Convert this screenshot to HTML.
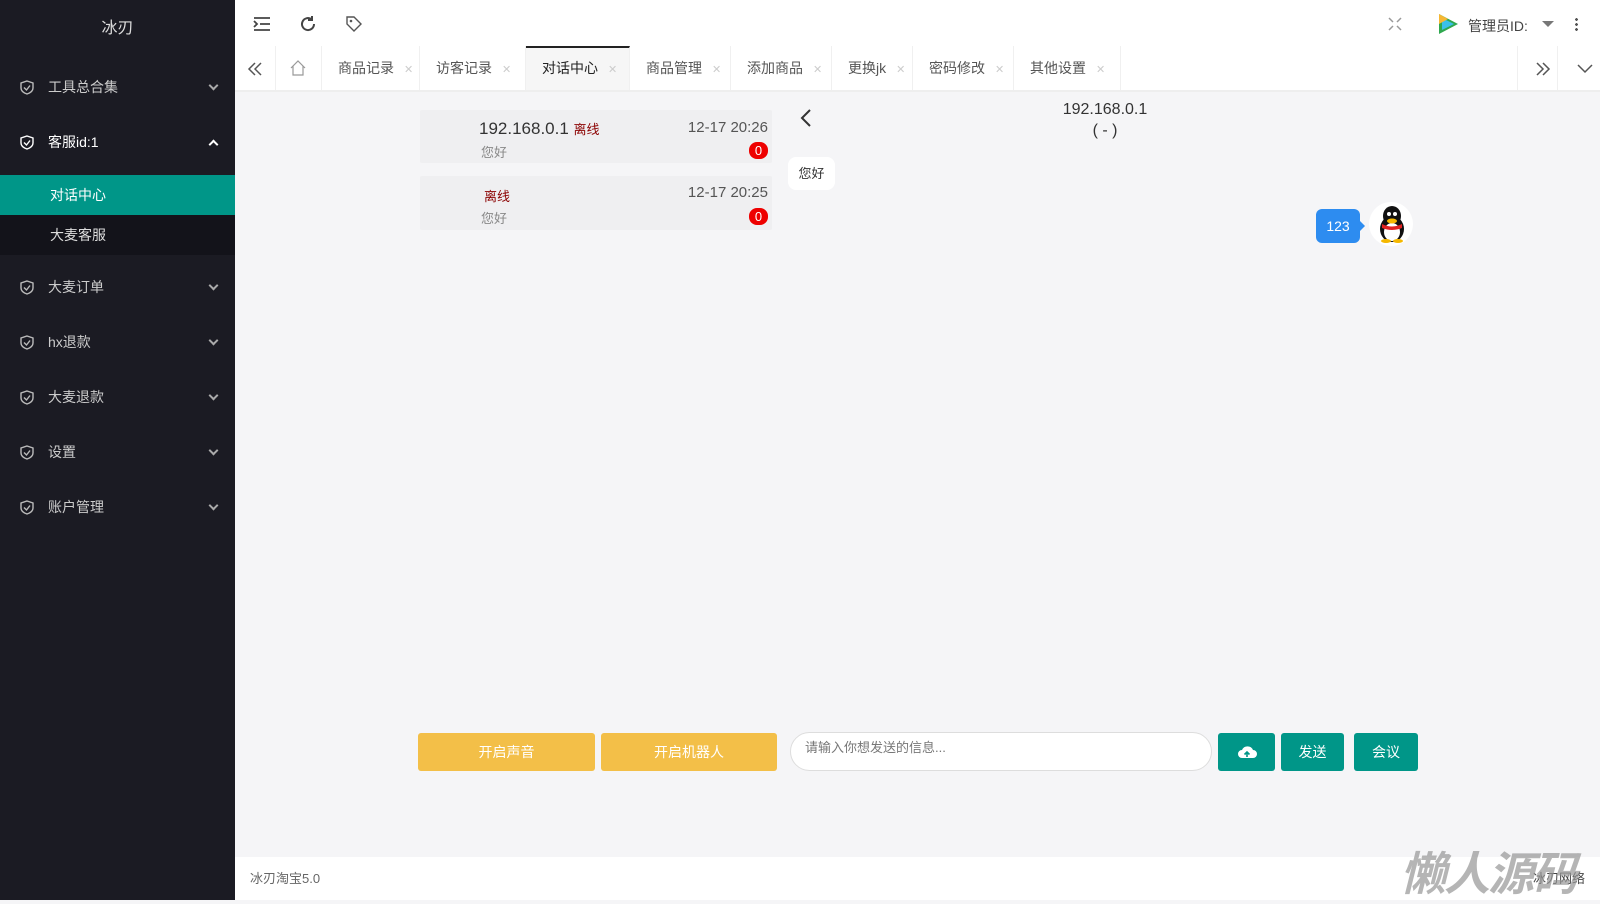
<!DOCTYPE html>
<html><head><meta charset="utf-8"><style>
*{margin:0;padding:0;box-sizing:border-box}
body{width:1600px;height:900px;overflow:hidden;font-family:"Liberation Sans","Noto Sans CJK SC",sans-serif;background:#f5f5f7;position:relative;font-size:14px;color:#333}
.side{position:absolute;left:0;top:0;width:235px;height:900px;background:#1b1b23}
.logo{position:absolute;top:14px;width:235px;text-align:center;color:#ddd;font-size:16px}
.mi{position:absolute;left:0;width:235px;height:40px;line-height:40px;color:#ccc;font-size:14px}
.mi svg{position:absolute;left:20px;top:13px}
.mi .t{position:absolute;left:48px}
.mi .ar{position:absolute;right:18px;top:15px;width:7px;height:7px;border-right:2px solid #aaa;border-bottom:2px solid #aaa;transform:rotate(45deg)}
.mi .up{transform:rotate(-135deg);top:19px}
.sub{position:absolute;left:0;width:235px;height:40px;line-height:40px;padding-left:50px;color:#ddd;background:#13131a}
.hdr{position:absolute;left:235px;top:0;right:0;height:46px;background:#fff}
.tabs{position:absolute;left:235px;top:46px;right:0;height:46px;background:#fff;border-bottom:2px solid #eee}
.tab{position:absolute;top:0;height:44px;line-height:44px;font-size:14px;color:#555;border-right:1px solid #f0f0f0;padding-left:16px}
.tab i{font-style:normal;color:#ccc;font-size:11px;margin-left:10px}
.act{background:#f6f6f6;border-top:2px solid #222;color:#222;line-height:40px}
.card{position:absolute;left:420px;width:352px;background:#efeff1;border-radius:2px}
.badge{position:absolute;right:4px;width:19px;height:17px;border-radius:8px;background:#e00;color:#fff;font-size:13px;text-align:center;line-height:17px}
.btn{position:absolute;top:733px;height:38px;line-height:38px;text-align:center;color:#fff;border-radius:3px;font-size:14px}
.y{background:#f3bf48}.g{background:#009688}
.foot{position:absolute;left:235px;right:0;top:857px;height:43px;background:#fff;font-size:13px;color:#666;line-height:43px;padding-left:15px}
</style></head><body>
<div class="side">
<div class="logo">冰刃</div>
<div class="mi" style="top:67px"><svg width="14" height="15"><path d="M7 1L13 3V8Q13 12 7 14Q1 12 1 8V3Z M4 7.5L6.5 10L10 5.5" stroke="#bbb" stroke-width="1.4" fill="none"/></svg><span class="t">工具总合集</span><span class="ar"></span></div>
<div class="mi" style="top:122px;color:#fff"><svg width="14" height="15"><path d="M7 1L13 3V8Q13 12 7 14Q1 12 1 8V3Z M4 7.5L6.5 10L10 5.5" stroke="#fff" stroke-width="1.4" fill="none"/></svg><span class="t">客服id:1</span><span class="ar up" style="border-color:#fff"></span></div>
<div class="sub" style="top:175px;background:#009688;color:#fff">对话中心</div>
<div class="sub" style="top:215px">大麦客服</div>
<div class="mi" style="top:267px"><svg width="14" height="15"><path d="M7 1L13 3V8Q13 12 7 14Q1 12 1 8V3Z M4 7.5L6.5 10L10 5.5" stroke="#bbb" stroke-width="1.4" fill="none"/></svg><span class="t">大麦订单</span><span class="ar"></span></div>
<div class="mi" style="top:322px"><svg width="14" height="15"><path d="M7 1L13 3V8Q13 12 7 14Q1 12 1 8V3Z M4 7.5L6.5 10L10 5.5" stroke="#bbb" stroke-width="1.4" fill="none"/></svg><span class="t">hx退款</span><span class="ar"></span></div>
<div class="mi" style="top:377px"><svg width="14" height="15"><path d="M7 1L13 3V8Q13 12 7 14Q1 12 1 8V3Z M4 7.5L6.5 10L10 5.5" stroke="#bbb" stroke-width="1.4" fill="none"/></svg><span class="t">大麦退款</span><span class="ar"></span></div>
<div class="mi" style="top:432px"><svg width="14" height="15"><path d="M7 1L13 3V8Q13 12 7 14Q1 12 1 8V3Z M4 7.5L6.5 10L10 5.5" stroke="#bbb" stroke-width="1.4" fill="none"/></svg><span class="t">设置</span><span class="ar"></span></div>
<div class="mi" style="top:487px"><svg width="14" height="15"><path d="M7 1L13 3V8Q13 12 7 14Q1 12 1 8V3Z M4 7.5L6.5 10L10 5.5" stroke="#bbb" stroke-width="1.4" fill="none"/></svg><span class="t">账户管理</span><span class="ar"></span></div>
</div>
<div class="hdr">
<svg style="position:absolute;left:18px;top:16px" width="18" height="16"><path d="M1 2H17M7 8H17M1 14H17M1 5L4 8L1 11" stroke="#444" stroke-width="1.8" fill="none"/></svg>
<svg style="position:absolute;left:64px;top:15px" width="18" height="18"><path d="M15 9A6 6 0 1 1 12.5 4.2M13 1V5H9" stroke="#444" stroke-width="2" fill="none"/></svg>
<svg style="position:absolute;left:110px;top:15px" width="18" height="18"><path d="M2 2H9L16 9L9 16L2 9Z" stroke="#555" stroke-width="1.4" fill="none"/><circle cx="6" cy="6" r="1.3" fill="#555"/></svg>
<svg style="position:absolute;left:1153px;top:17px" width="14" height="14"><path d="M1 1L5 5M13 1L9 5M1 13L5 9M13 13L9 9" stroke="#999" stroke-width="1.5"/></svg>
<svg style="position:absolute;left:1201px;top:12px" width="24" height="24"><path d="M3 2L22 12L3 22Z" fill="#2fa84f"/><path d="M6 6L18 12L6 18Z" fill="#3ac0ea"/><path d="M3 2L12 7L3 12Z" fill="#f7b733"/></svg>
<div style="position:absolute;left:1233px;top:16px;font-size:14px;color:#444">管理员ID:</div>
<div style="position:absolute;left:1307px;top:21px;border:6px solid transparent;border-top-color:#777"></div>
<div style="position:absolute;left:1340px;top:17px;width:3px;height:14px;background:radial-gradient(circle,#555 1.3px,transparent 1.5px) 0 0/3px 5px"></div>
</div>
<div class="tabs">
<svg style="position:absolute;left:12px;top:16px" width="16" height="14"><path d="M8 1L2 7L8 13M14 1L8 7L14 13" stroke="#555" stroke-width="1.5" fill="none"/></svg>
<div class="tab" style="left:40px;width:47px;border-left:1px solid #f0f0f0"></div>
<svg style="position:absolute;left:55px;top:14px" width="16" height="16"><path d="M1 8L8 1L15 8M3 6V15H13V6" stroke="#999" stroke-width="1.2" fill="none"/></svg>
<div class="tab" style="left:87px;width:98px">商品记录<i>✕</i></div>
<div class="tab" style="left:185px;width:106px">访客记录<i>✕</i></div>
<div class="tab act" style="left:291px;width:104px">对话中心<i>✕</i></div>
<div class="tab" style="left:395px;width:101px">商品管理<i>✕</i></div>
<div class="tab" style="left:496px;width:101px">添加商品<i>✕</i></div>
<div class="tab" style="left:597px;width:81px">更换jk<i>✕</i></div>
<div class="tab" style="left:678px;width:101px">密码修改<i>✕</i></div>
<div class="tab" style="left:779px;width:107px">其他设置<i>✕</i></div>
<div class="tab" style="left:1282px;width:41px;border-left:1px solid #f0f0f0"></div>
<svg style="position:absolute;left:1300px;top:16px" width="16" height="14"><path d="M2 1L8 7L2 13M8 1L14 7L8 13" stroke="#555" stroke-width="1.5" fill="none"/></svg>
<svg style="position:absolute;left:1342px;top:18px" width="16" height="10"><path d="M1 1L8 8L15 1" stroke="#555" stroke-width="1.5" fill="none"/></svg>
</div>
<div class="card" style="top:110px;height:53px">
<div style="position:absolute;left:59px;top:9px;font-size:17px;color:#333">192.168.0.1 <span style="font-size:13px;color:#8b0000">离线</span></div>
<div style="position:absolute;left:61px;top:32px;font-size:13px;color:#888">您好</div>
<div style="position:absolute;right:4px;top:9px;font-size:15px;color:#555">12-17 20:26</div>
<div class="badge" style="top:32px">0</div>
</div>
<div class="card" style="top:176px;height:54px">
<div style="position:absolute;left:64px;top:10px;font-size:13px;color:#8b0000">离线</div>
<div style="position:absolute;left:61px;top:32px;font-size:13px;color:#888">您好</div>
<div style="position:absolute;right:4px;top:8px;font-size:15px;color:#555">12-17 20:25</div>
<div class="badge" style="top:32px">0</div>
</div>
<svg style="position:absolute;left:800px;top:109px" width="12" height="18"><path d="M10 1L2 9L10 17" stroke="#333" stroke-width="2" fill="none"/></svg>
<div style="position:absolute;left:1000px;width:210px;top:99px;text-align:center;font-size:16px;color:#333;line-height:21px">192.168.0.1<br>( - )</div>
<div style="position:absolute;left:788px;top:157px;width:47px;height:33px;background:#fff;border-radius:8px;line-height:33px;text-align:center;font-size:13px">您好</div>
<div style="position:absolute;left:1316px;top:209px;width:44px;height:34px;background:#2d8cf0;border-radius:6px;color:#fff;line-height:34px;text-align:center;font-size:14px">123</div>
<div style="position:absolute;left:1359px;top:220px;border:6px solid transparent;border-left-color:#2d8cf0"></div>
<div style="position:absolute;left:1369px;top:202px;width:44px;height:44px;border-radius:50%;background:#fff"></div>
<svg style="position:absolute;left:1377px;top:205px" width="30" height="38"><ellipse cx="15" cy="24" rx="12" ry="13" fill="#111"/><ellipse cx="15" cy="11" rx="9" ry="10" fill="#111"/><ellipse cx="15" cy="27" rx="8" ry="9" fill="#fff"/><path d="M5 19Q15 24 25 19V23Q15 27 5 23Z" fill="#e02020"/><ellipse cx="15" cy="16" rx="5" ry="2.5" fill="#f5b800"/><circle cx="12" cy="9" r="2" fill="#fff"/><circle cx="18" cy="9" r="2" fill="#fff"/><ellipse cx="9" cy="36" rx="5" ry="2" fill="#f5b800"/><ellipse cx="21" cy="36" rx="5" ry="2" fill="#f5b800"/></svg>
<div class="btn y" style="left:418px;width:177px">开启声音</div>
<div class="btn y" style="left:601px;width:176px">开启机器人</div>
<div style="position:absolute;left:790px;top:732px;width:422px;height:39px;background:#fff;border:1px solid #ddd;border-radius:20px;padding:4px 14px;font-size:13px;color:#777">请输入你想发送的信息...</div>
<div class="btn g" style="left:1218px;width:57px"><svg width="20" height="14" style="margin-top:12px"><path d="M5 13A4 4 0 0 1 5 5A6 6 0 0 1 16 5A4 4 0 0 1 16 13Z" fill="#fff"/><path d="M10 12V7M7.5 9.5L10 7L12.5 9.5" stroke="#009688" stroke-width="1.6" fill="none"/></svg></div>
<div class="btn g" style="left:1281px;width:63px">发送</div>
<div class="btn g" style="left:1354px;width:64px">会议</div>
<div class="foot">冰刃淘宝5.0<span style="position:absolute;right:15px;color:#444">冰刃网络</span></div>
<div style="position:absolute;left:1400px;top:838px;font-size:46px;font-weight:bold;font-style:italic;color:rgba(150,150,150,.7);letter-spacing:-2px">懒人源码</div>
</body></html>
